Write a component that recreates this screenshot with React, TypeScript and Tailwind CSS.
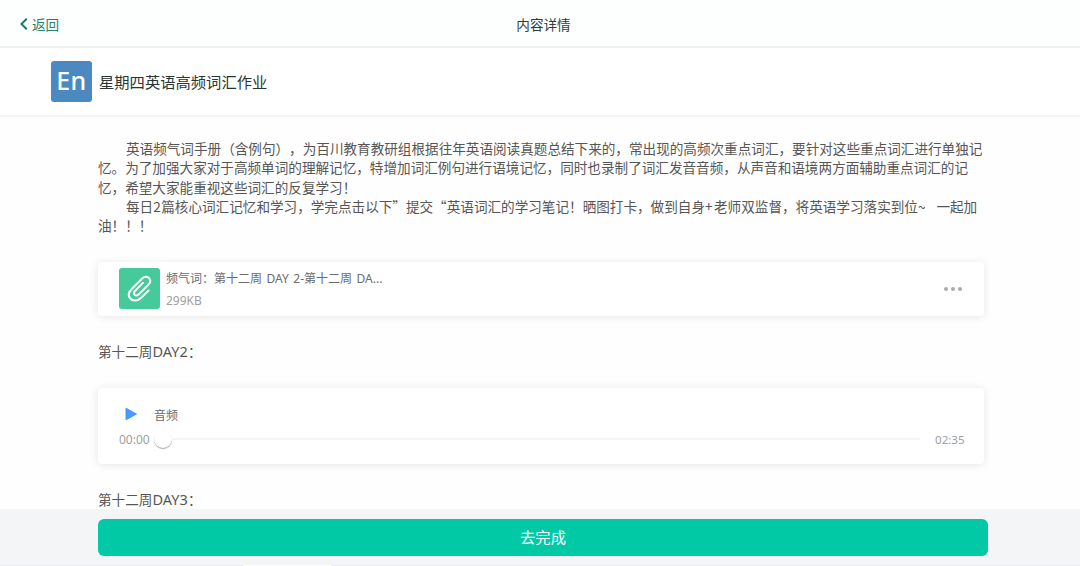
import { ReactNode } from "react";

const introLines = [
  { id: 1, indent: true, text: "英语频气词手册（含例句），为百川教育教研组根据往年英语阅读真题总结下来的，常出现的高频次重点词汇，要针对这些重点词汇进行单独记" },
  { id: 2, indent: false, text: "忆。为了加强大家对于高频单词的理解记忆，特增加词汇例句进行语境记忆，同时也录制了词汇发音音频，从声音和语境两方面辅助重点词汇的记" },
  { id: 3, indent: false, text: "忆，希望大家能重视这些词汇的反复学习！" },
  {
    id: 4,
    indent: true,
    text: (
      <>
        每日<span className="tracking-[0.5px]">2</span>篇核心词汇记忆和学习，学完点击以下”提交“英语词汇的学习笔记！晒图打卡，做到自身
        <span className="tracking-[1.5px]">+</span>老师双监督，将英语学习落实到位
        <span className="tracking-[1.6px]">~  </span>一起加
      </>
    ),
  },
  { id: 5, indent: false, text: "油！！！" },
];

const Card = ({ className, children }: { className: string; children: ReactNode }) => (
  <div className={`rounded bg-white shadow-[0_1px_8px_rgba(0,0,0,0.1)] ${className}`}>
    {children}
  </div>
);

const DayTitle = ({ day }: { day: string }) => (
  <h3 className="mt-[25px] h-5 leading-5">
    第十二周<span className="text-[14.5px] tracking-[0.1px]">{day}</span>：
  </h3>
);

const Header = () => (
  <header className="grid h-12 shrink-0 grid-cols-3 items-center border-b-2 border-[#eff2f1] bg-[#fcfffe] pt-[5px] text-[13.6px]">
    <button className="flex items-center gap-1 pl-5 text-[#26816e]">
      <svg className="-mt-[3px]" width="8" height="12" viewBox="0 0 8 12" fill="none" stroke="#177763" strokeWidth="1.9">
        <path d="M6.8 0.8 1.4 6l5.4 5.2" />
      </svg>
      <span>返回</span>
    </button>
    <h1 className="pl-[7px] text-center text-[#303c39]">内容详情</h1>
  </header>
);

const AttachmentCard = () => (
  <Card className="mt-[27px] flex h-[54px] items-center pr-[22px] pl-[21px]">
    <div className="-mt-0.5 flex size-[41px] items-center justify-center rounded-[3px] bg-[#46ca9b]">
      <svg width="25" height="27" viewBox="0 0 25 27" fill="none" stroke="white" strokeWidth="2" strokeLinecap="round" strokeLinejoin="round">
        <path d="M21.5 15.5 14.2 22.7C10.5 26.3 5.8 26.3 3.3 23.5C0.9 20.7 1.6 17.1 4.5 14.2L14.8 3.8C17.1 1.5 20.2 1.1 22 3.1C23.8 5.1 23.4 7.7 21.3 9.8L11.9 19.3C10.4 20.8 8.7 20.9 7.6 19.7C6.5 18.4 6.9 17 8.2 15.7L15.9 7.9" />
      </svg>
    </div>
    <div className="ml-1.5 flex-1 pt-0.5 text-xs leading-[22px]">
      <p className="text-[#6b6b6b] [word-spacing:1.4px]">频气词：第十二周 DAY 2-第十二周 DA...</p>
      <p className="text-[#a0a0a0]">299KB</p>
    </div>
    <div className="flex gap-[3px]">
      <span className="size-1 rounded-full bg-[#ababab]" />
      <span className="size-1 rounded-full bg-[#ababab]" />
      <span className="size-1 rounded-full bg-[#ababab]" />
    </div>
  </Card>
);

const AudioCard = () => (
  <Card className="mt-[27px] h-[76px] px-[21px] pt-[15px] text-xs">
    <div className="flex h-6 items-center pl-1.5">
      <svg className="-mt-0.5" width="12" height="14" viewBox="0 0 12 14" fill="#4b98ff" stroke="#4b98ff" strokeWidth="1" strokeLinejoin="round">
        <path d="M1 1.2v11.6L11.5 7Z" />
      </svg>
      <span className="ml-[17px] pt-0.5 text-[#6b6b6b]">音频</span>
    </div>
    <div className="flex h-6 items-center text-[#a0a0a0]">
      <span className="w-[35px] pt-px">00:00</span>
      <span className="size-[18px] rounded-full bg-white shadow-[0_1px_1px_rgba(0,0,0,0.35)]" />
      <span className="h-0.5 flex-1 bg-[#f5f5f5]" />
      <span className="ml-[15px] w-7 pt-px text-[11.6px]">02:35</span>
    </div>
  </Card>
);

const App = () => {
  return (
    <div className="flex h-[566px] w-[1080px] flex-col overflow-hidden bg-[#fefefe] font-['Noto_Sans','Noto_Sans_CJK_SC',sans-serif] [text-spacing-trim:space-all]">
      <Header />

      <div className="flex h-[69px] shrink-0 items-center border-b-2 border-[#f4f4f4] bg-white pl-[51px]">
        <div className="flex size-[41px] items-center justify-center rounded-[3px] bg-[#4b89c0] pb-0.5 text-[25px] leading-none font-medium tracking-[0.5px] text-white">
          En
        </div>
        <h2 className="ml-[7px] pt-0.5 text-[15.3px] text-[#293532]">星期四英语高频词汇作业</h2>
      </div>

      <main className="h-[392px] shrink-0 overflow-hidden pt-[22px] pr-24 pl-[98px] text-[13.6px] text-[#565656]">
        <div className="font-['Noto_Sans_CJK_SC',sans-serif] leading-[19.3px] whitespace-pre">
          {introLines.map((line) => (
            <p key={line.id} className={line.indent ? "pl-7" : ""}>
              {line.text}
            </p>
          ))}
        </div>
        <AttachmentCard />
        <DayTitle day="DAY2" />
        <AudioCard />
        <DayTitle day="DAY3" />
      </main>

      <footer className="h-14 shrink-0 bg-[#f4f5f7] pt-2.5 pr-[92px] pl-[98px]">
        <button className="h-[37px] w-full rounded-md bg-[#01c9a6] text-[15.3px] text-white">去完成</button>
      </footer>
      <div className="flex h-px shrink-0 bg-[#e8ebf2]">
        <span className="ml-[243px] w-[88px] bg-white" />
      </div>
    </div>
  );
};

export default App;
